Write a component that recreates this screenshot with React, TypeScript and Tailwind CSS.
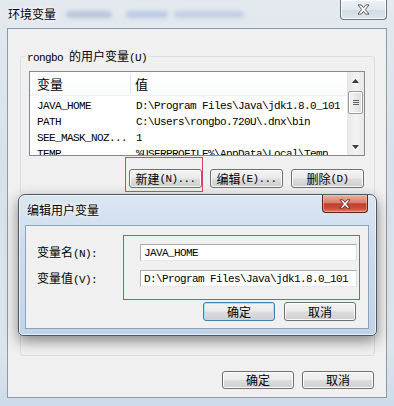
import React from "react";

const ASCII = /^[\x20-\x7E]+$/;

function T({ s, big }: { s: string; big?: boolean }) {
  const parts = s.split(/([\x20-\x7E]+)/).filter((p) => p.length > 0);
  return (
    <>
      {parts.map((p, i) =>
        ASCII.test(p) ? (
          <span
            key={i}
            className="font-['Liberation_Mono',monospace] text-[11px] tracking-[-0.6px] whitespace-pre"
          >
            {p}
          </span>
        ) : (
          <span
            key={i}
            className={
              big
                ? "font-['Noto_Sans_CJK_SC',sans-serif] text-[13px]"
                : "font-['Noto_Sans_CJK_SC',sans-serif] text-[12px]"
            }
          >
            {p}
          </span>
        )
      )}
    </>
  );
}

function Btn({ label, cls, def }: { label: string; cls: string; def?: boolean }) {
  return (
    <div
      className={
        (def
          ? "border-[#3c7fb1] shadow-[inset_0_0_0_1px_#a9e1f8] "
          : "border-[#707070] shadow-[inset_0_0_0_1px_#fbfbfb] ") +
        "flex items-center justify-center rounded-[3px] border bg-[linear-gradient(180deg,#f3f3f3_0%,#ebebeb_48%,#dddddd_52%,#cfcfcf_100%)] leading-[14px] text-black " +
        cls
      }
    >
      <T s={label} />
    </div>
  );
}

function XGlyph({ stroke, w, h }: { stroke: string; w: number; h: number }) {
  return (
    <svg width={w} height={h} viewBox="0 0 14 12">
      <polygon
        points="1,1 4.6,1 7,4 9.4,1 13,1 9,6 13,11 9.4,11 7,8 4.6,11 1,11 5,6"
        fill="#ffffff"
        stroke={stroke}
        strokeWidth="1"
        strokeLinejoin="round"
      />
    </svg>
  );
}

function Row({ a, b }: { a: string; b: string }) {
  return (
    <div className="h-[16px] shrink-0 flex items-center leading-[14px]">
      <div className="w-[101px] pl-[7px] overflow-hidden whitespace-nowrap">
        <T s={a} />
      </div>
      <div className="pl-[5px] whitespace-nowrap overflow-hidden">
        <T s={b} />
      </div>
    </div>
  );
}

export default function App() {
  return (
    <div className="relative w-[394px] h-[406px] overflow-hidden flex flex-col bg-[linear-gradient(180deg,#e3e9ef_0%,#d8e1ea_40%,#dde5ec_85%,#cddbea_100%)] text-black">
      {/* title bar */}
      <div className="h-[28px] shrink-0 flex items-center pl-[8px]">
        <span className="font-['Noto_Sans_CJK_SC',sans-serif] text-[12px] leading-[14px] [text-shadow:0_0_6px_#fff,0_0_3px_#fff]">
          环境变量
        </span>
        <div className="ml-[10px] w-[46px] h-[7px] rounded-full bg-[#8ea4c6] opacity-50 blur-[2px]" />
        <div className="ml-[14px] w-[42px] h-[7px] rounded-full bg-[#7f9fd6] opacity-40 blur-[2px]" />
        <div className="ml-[6px] w-[70px] h-[7px] rounded-full bg-[#8fa8d8] opacity-40 blur-[2px]" />
        <div className="absolute right-[7px] top-0 w-[47px] h-[20px] rounded-b-[4px] border border-t-0 border-[#6b7785] bg-[linear-gradient(180deg,#eef2f6_0%,#e1e8ee_50%,#d2dce5_52%,#dde5ec_100%)] shadow-[inset_0_0_0_1px_rgba(255,255,255,0.75)] flex items-center justify-center">
          <XGlyph stroke="#4a4f55" w={13} h={11} />
        </div>
      </div>

      {/* client */}
      <div className="mx-[7px] mb-[8px] flex-1 border border-[#8e9aa6] bg-[#f0f0f0] flex flex-col">
        <fieldset className="mt-[19px] ml-[12px] mr-[11px] border border-[#d5dfe5] rounded-[3px] pb-[7px]">
          <legend className="ml-[4px] px-[2px] leading-[14px]">
            <T s="rongbo 的用户变量(U)" />
          </legend>
          <div className="ml-[8px] mt-[6px] w-[336px] h-[85px] border border-[#828790] bg-white flex">
            <div className="flex-1 flex flex-col overflow-hidden">
              <div className="h-[24px] shrink-0 flex items-center bg-[linear-gradient(180deg,#ffffff_0%,#fafbfc_100%)] border-b border-[#f0f0f0]">
                <div className="w-[101px] h-[20px] pl-[7px] flex items-center border-r border-[#e1e3e6] leading-[16px]">
                  <T s="变量" big />
                </div>
                <div className="pl-[4px] leading-[16px]">
                  <T s="值" big />
                </div>
              </div>
              <Row a="JAVA_HOME" b={"D:\\Program Files\\Java\\jdk1.8.0_101"} />
              <Row a="PATH" b={"C:\\Users\\rongbo.720U\\.dnx\\bin"} />
              <Row a="SEE_MASK_NOZ..." b="1" />
              <Row a="TEMP" b={"%USERPROFILE%\\AppData\\Local\\Temp"} />
            </div>
            <div className="w-[17px] h-full shrink-0 bg-[linear-gradient(90deg,#e6e6e6_0%,#f2f2f2_50%,#e9e9e9_100%)] flex flex-col items-center">
              <div className="h-[17px] w-full flex items-center justify-center">
                <svg width="7" height="4" viewBox="0 0 7 4">
                  <polygon points="3.5,0 7,4 0,4" fill="#3c3c3c" />
                </svg>
              </div>
              <div className="flex-1 w-full flex flex-col items-center">
                <div className="mt-[2px] w-[15px] h-[23px] rounded-[2px] border border-[#9a9a9a] bg-[linear-gradient(90deg,#f4f4f4_0%,#e9e9e9_50%,#dcdcdc_100%)] shadow-[inset_0_0_0_1px_#fcfcfc] flex flex-col items-center justify-center gap-[1px]">
                  <div className="w-[6px] h-[1px] bg-[#5f5f5f]" />
                  <div className="w-[6px] h-[1px] bg-[#5f5f5f]" />
                  <div className="w-[6px] h-[1px] bg-[#5f5f5f]" />
                </div>
              </div>
              <div className="h-[17px] w-full flex items-center justify-center">
                <svg width="7" height="4" viewBox="0 0 7 4">
                  <polygon points="0,0 7,0 3.5,4" fill="#3c3c3c" />
                </svg>
              </div>
            </div>
          </div>
          <div className="mt-[13px] flex justify-end gap-[8px] pr-[10px]">
            <Btn label="新建(N)..." cls="w-[73px] h-[19px]" />
            <Btn label="编辑(E)..." cls="w-[73px] h-[19px]" />
            <Btn label="删除(D)" cls="w-[73px] h-[19px]" />
          </div>
        </fieldset>

        <div className="mt-[15px] ml-[12px] mr-[11px] h-[145px] border border-[#d5dfe5] rounded-[3px]" />

        <div className="mt-[15px] flex justify-end gap-[8px] pr-[12px]">
          <Btn label="确定" cls="w-[72px] h-[18px]" />
          <Btn label="取消" cls="w-[72px] h-[18px]" />
        </div>
      </div>

      {/* inner dialog */}
      <div className="absolute left-[18px] top-[194px] w-[359px] h-[142px] rounded-t-[7px] rounded-b-[5px] border border-[#4d5868] bg-[linear-gradient(180deg,#dbe6f2_0%,#cddced_35%,#c1d4ea_100%)] shadow-[0_5px_14px_rgba(0,0,0,0.45),inset_0_0_0_1px_rgba(255,255,255,0.6)] flex flex-col">
        <div className="h-[30px] shrink-0 flex items-center pl-[8px]">
          <span className="font-['Noto_Sans_CJK_SC',sans-serif] text-[12px] leading-[14px] [text-shadow:0_0_6px_#fff,0_0_3px_#fff]">
            编辑用户变量
          </span>
        </div>
        <div className="ml-[6px] w-[344px] h-[104px] border border-[#8ea2b8] bg-[#f0f0f0] flex flex-col">
          <div className="mt-[18px] h-[17px] flex items-center">
            <div className="w-[114px] pl-[11px] leading-[14px]">
              <T s="变量名(N):" />
            </div>
            <div className="w-[217px] h-[17px] border border-[#abadb3] border-r-[#dbdfe6] border-b-[#e3e9ef] bg-white flex items-center pl-[3px] leading-[14px]">
              <T s="JAVA_HOME" />
            </div>
          </div>
          <div className="mt-[9px] h-[17px] flex items-center">
            <div className="w-[114px] pl-[11px] leading-[14px]">
              <T s="变量值(V):" />
            </div>
            <div className="w-[217px] h-[17px] border border-[#abadb3] border-r-[#dbdfe6] border-b-[#e3e9ef] bg-white flex items-center pl-[3px] leading-[14px] overflow-hidden whitespace-nowrap">
              <T s={"D:\\Program Files\\Java\\jdk1.8.0_101"} />
            </div>
          </div>
          <div className="mt-[15px] flex pl-[177px] gap-[9px]">
            <Btn label="确定" cls="w-[72px] h-[19px]" def />
            <Btn label="取消" cls="w-[72px] h-[19px]" />
          </div>
        </div>
        <div className="absolute right-[8px] top-0 w-[46px] h-[18px] rounded-b-[4px] border border-t-0 border-[#5e2019] bg-[linear-gradient(180deg,#eab1a2_0%,#d8806b_45%,#c13f2d_52%,#c9503a_80%,#e08363_100%)] shadow-[inset_0_0_0_1px_rgba(255,210,200,0.45)] flex items-center justify-center">
          <XGlyph stroke="#5a1a12" w={12} h={10} />
        </div>
      </div>

      {/* red annotation boxes */}
      <div className="absolute left-[125px] top-[157px] w-[78px] h-[35px] border border-[#e0405a]" />
      <div className="absolute left-[123px] top-[235px] w-[237px] h-[65px] border border-[#e0405a]" />
    </div>
  );
}
